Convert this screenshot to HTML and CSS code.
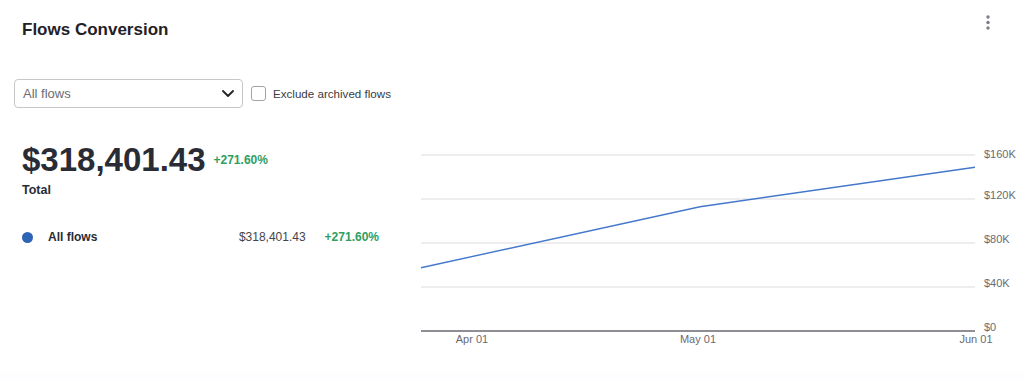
FILE: index.html
```html
<!DOCTYPE html>
<html lang="en">
<head>
  <meta charset="UTF-8" />
  <meta name="viewport" content="width=device-width, initial-scale=1.0"/>
  <title>Flows Conversion</title>
  <link rel="stylesheet" href="styles.css">
</head>
<body>
  <div class="card">
    <div class="card-header">
      <h2 class="card-title">Flows Conversion</h2>
      <button class="menu-btn" aria-label="More">
        <svg width="6" height="16" viewBox="0 0 6 16">
          <circle cx="3" cy="2" r="1.7" />
          <circle cx="3" cy="7.5" r="1.7" />
          <circle cx="3" cy="13" r="1.7" />
        </svg>
      </button>
    </div>

    <div class="filters">
      <div class="select">
        <span>All flows</span>
        <svg width="12" height="7" viewBox="0 0 12 7">
          <path d="M1 1 L6 6 L11 1" fill="none" stroke="#222" stroke-width="1.8" stroke-linecap="round" stroke-linejoin="round"/>
        </svg>
      </div>
      <label class="check">
        <span class="box"></span>
        Exclude archived flows
      </label>
    </div>

    <div class="card-body">
      <div class="summary">
        <div class="total-row">
          <span class="total-value">$318,401.43</span>
          <span class="change">+271.60%</span>
        </div>
        <div class="total-label">Total</div>

        <div class="legend-row">
          <span class="dot"></span>
          <span class="legend-name">All flows</span>
          <span class="legend-value">$318,401.43</span>
          <span class="change legend-change">+271.60%</span>
        </div>
      </div>

      <svg class="chart" width="614" height="215" viewBox="0 0 614 215">
        <g class="grid">
          <line x1="11" y1="15" x2="565" y2="15" />
          <line x1="11" y1="59" x2="565" y2="59" />
          <line x1="11" y1="103" x2="565" y2="103" />
          <line x1="11" y1="147" x2="565" y2="147" />
        </g>
        <line class="axis" x1="11" y1="191" x2="565" y2="191" />

        <polyline class="series" points="11,127.7 290,66.7 565,27.3" />

        <g class="y-labels">
          <text x="574" y="15">$160K</text>
          <text x="574" y="56">$120K</text>
          <text x="574" y="100">$80K</text>
          <text x="574" y="144">$40K</text>
          <text x="574" y="188">$0</text>
        </g>
        <g class="x-labels">
          <text x="62" y="200">Apr 01</text>
          <text x="288" y="200">May 01</text>
          <text x="566" y="200">Jun 01</text>
        </g>
      </svg>
    </div>
  </div>
</body>
</html>
```

FILE: styles.css
```css
body {
  margin: 0;
  font-family: 'Liberation Sans', Arial, sans-serif;
  background: #fdfcfe;
  color: #2a2c35;
}

.card {
  background: #ffffff;
  height: 373px;
  box-shadow: 0 3px 6px rgba(110, 90, 150, 0.05);
}

.card-header {
  display: flex;
  justify-content: space-between;
  align-items: center;
  padding: 20px 33px 0 22px;
  height: 20px;
}

.card-title {
  margin: 0;
  font-size: 17px;
  line-height: 20px;
  font-weight: bold;
  color: #1f2127;
}

.menu-btn {
  align-self: flex-start;
  margin-top: -5px;
  padding: 0;
  border: none;
  background: none;
  display: block;
  cursor: pointer;
}

.menu-btn svg {
  display: block;
  fill: #7c7d85;
}

.filters {
  display: flex;
  align-items: center;
  margin-top: 39px;
  padding-left: 14px;
}

.select {
  box-sizing: border-box;
  width: 229px;
  height: 29px;
  border: 1px solid #c6c6cb;
  border-radius: 4px;
  padding: 0 8px;
  display: flex;
  align-items: center;
  justify-content: space-between;
  font-size: 13px;
  color: #6b6c72;
}

.select svg {
  display: block;
}

.check {
  display: flex;
  align-items: center;
  margin-left: 8px;
  font-size: 11.6px;
  color: #3a3b42;
}

.check .box {
  box-sizing: border-box;
  width: 15px;
  height: 15px;
  border: 1px solid #a2a2a8;
  border-radius: 3px;
  margin-right: 7px;
}

.card-body {
  display: flex;
  margin-top: 32px;
}

.summary {
  box-sizing: border-box;
  width: 410px;
  padding-left: 22px;
}

.total-row {
  display: flex;
  align-items: center;
  height: 40px;
}

.total-value {
  font-size: 33px;
  line-height: 40px;
  font-weight: bold;
  color: #2a2c35;
}

.change {
  color: #2f9e62;
  font-weight: bold;
  font-size: 12px;
}

.total-row .change {
  margin-left: 8px;
}

.total-label {
  margin-top: 2px;
  font-size: 12.5px;
  line-height: 16px;
  font-weight: bold;
  color: #2a2c35;
}

.legend-row {
  display: flex;
  align-items: center;
  width: 357px;
  height: 16px;
  margin-top: 31px;
  font-size: 13px;
}

.dot {
  width: 11px;
  height: 11px;
  border-radius: 50%;
  background: #2d64b5;
  margin-right: 15px;
}

.legend-name {
  flex: 1;
  font-size: 12px;
  font-weight: bold;
  color: #2a2c35;
}

.legend-value {
  font-size: 12px;
  color: #44454c;
}

.legend-change {
  margin-left: 19px;
}

.chart {
  display: block;
}

.grid line {
  stroke: #dcdcdf;
  stroke-width: 1;
}

.axis {
  stroke: #8e8e94;
  stroke-width: 2;
}

.series {
  fill: none;
  stroke: #4478cc;
  stroke-width: 1.4;
}

.chart text {
  font-family: 'Liberation Sans', Arial, sans-serif;
  font-size: 11px;
  fill: #6a6b72;
  dominant-baseline: middle;
}

.x-labels text {
  text-anchor: middle;
}
```
